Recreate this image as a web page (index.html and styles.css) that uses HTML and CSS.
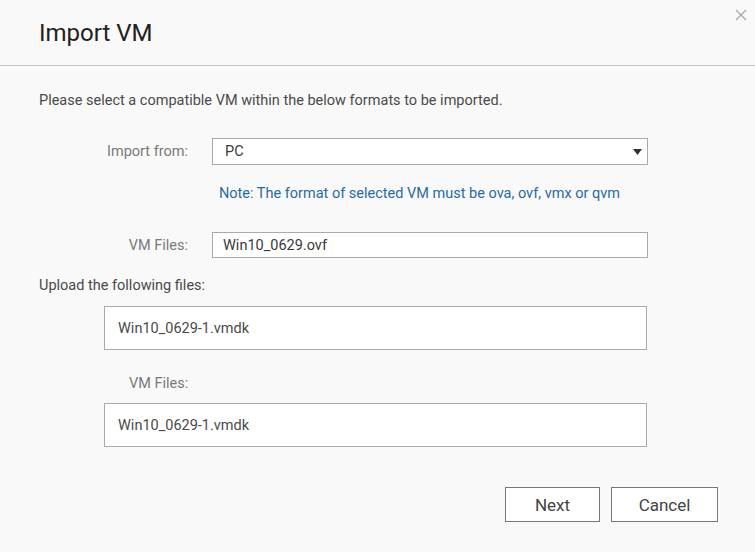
FILE: index.html
```html
<!DOCTYPE html>
<html>
<head>
<meta charset="utf-8">
<link rel="stylesheet" href="styles.css">
</head>
<body>
<div class="dialog">
  <header class="dlg-header">
    <h1 class="dlg-title">Import VM</h1>
    <button class="dlg-close" aria-label="Close">
      <svg width="12" height="12" viewBox="0 0 12 12"><path d="M1 1 L11 11 M11 1 L1 11" stroke="#a8a8a8" stroke-width="1.3" fill="none"/></svg>
    </button>
  </header>
  <main class="dlg-body">
    <p class="intro">Please select a compatible VM within the below formats to be imported.</p>
    <div class="form-row row-import">
      <label class="form-label">Import from:</label>
      <div class="select">
        <span>PC</span>
        <svg class="caret" width="9" height="6" viewBox="0 0 9 6"><path d="M0 0 H9 L4.5 6 Z" fill="#333"/></svg>
      </div>
    </div>
    <div class="form-row row-note">
      <span></span>
      <p class="note">Note: The format of selected VM must be ova, ovf, vmx or qvm</p>
    </div>
    <div class="form-row row-files">
      <label class="form-label">VM Files:</label>
      <div class="input">Win10_0629.ovf</div>
    </div>
    <p class="upload-label">Upload the following files:</p>
    <div class="file-box box-1">Win10_0629-1.vmdk</div>
    <p class="sub-label">VM Files:</p>
    <div class="file-box box-2">Win10_0629-1.vmdk</div>
    <div class="actions">
      <button class="btn btn-next">Next</button>
      <button class="btn btn-cancel">Cancel</button>
    </div>
  </main>
</div>
</body>
</html>
```

FILE: styles.css
```css
html, body {
  margin: 0;
  padding: 0;
  background: #f9f9f9;
}
body {
  font-family: Roboto, "Liberation Sans", sans-serif;
  color: #444;
  font-size: 14.5px;
}
.dialog {
  width: 755px;
  height: 552px;
  position: relative;
  background: #f9f9f9;
}
.dlg-header {
  height: 66px;
  border-bottom: 1px solid #c4c4c4;
  box-sizing: border-box;
  padding-left: 39px;
  display: flex;
  align-items: center;
}
.dlg-title {
  margin: 0;
  font-size: 24px;
  font-weight: 400;
  color: #222;
  line-height: 1;
  padding-top: 1px;
}
.dlg-close {
  position: absolute;
  top: 9px;
  right: 8px;
  border: none;
  background: none;
  padding: 0;
  width: 12px;
  height: 12px;
  display: flex;
}
.dlg-body {
  padding: 0 39px 0 39px;
  display: flex;
  flex-direction: column;
}
.intro {
  margin: 25px 0 0 0;
  line-height: 20px;
  color: #4a4a4a;
}
.form-row {
  display: grid;
  grid-template-columns: 149px 436px;
  column-gap: 24px;
  align-items: center;
}
.row-import { margin-top: 27px; }
.row-note { margin-top: 19px; }
.row-files { margin-top: 28px; }
.form-label {
  text-align: right;
  color: #7a7a7a;
}
.select, .input {
  background: #fff;
  border: 1px solid #aaa;
  box-sizing: border-box;
  display: flex;
  align-items: center;
  padding-left: 12px;
  color: #3a3a3a;
}
.select {
  height: 27px;
  justify-content: space-between;
  padding-right: 5px;
}
.input {
  height: 26px;
  padding-left: 10px;
}
.note {
  margin: 0;
  padding-left: 7px;
  line-height: 20px;
  color: #2b6a9e;
}
.upload-label {
  margin: 18px 0 0 0;
  line-height: 20px;
  color: #4a4a4a;
}
.file-box {
  margin-left: 65px;
  width: 543px;
  box-sizing: border-box;
  background: #fff;
  border: 1px solid #aaa;
  display: flex;
  align-items: center;
  padding-left: 13px;
  color: #4a4a4a;
}
.box-1 { margin-top: 10px; height: 44px; }
.box-2 { margin-top: 9px; height: 44px; }
.sub-label {
  margin: 24px 0 0 90px;
  line-height: 20px;
  color: #7a7a7a;
}
.actions {
  margin-top: 40px;
  display: flex;
  justify-content: flex-end;
  gap: 11px;
  margin-right: -2px;
}
.btn {
  height: 35px;
  background: #fff;
  border: 1px solid #777;
  font-family: Roboto, "Liberation Sans", sans-serif;
  font-size: 17px;
  color: #444;
  padding: 0;
}
.btn-next { width: 95px; }
.btn-cancel { width: 107px; }
```
